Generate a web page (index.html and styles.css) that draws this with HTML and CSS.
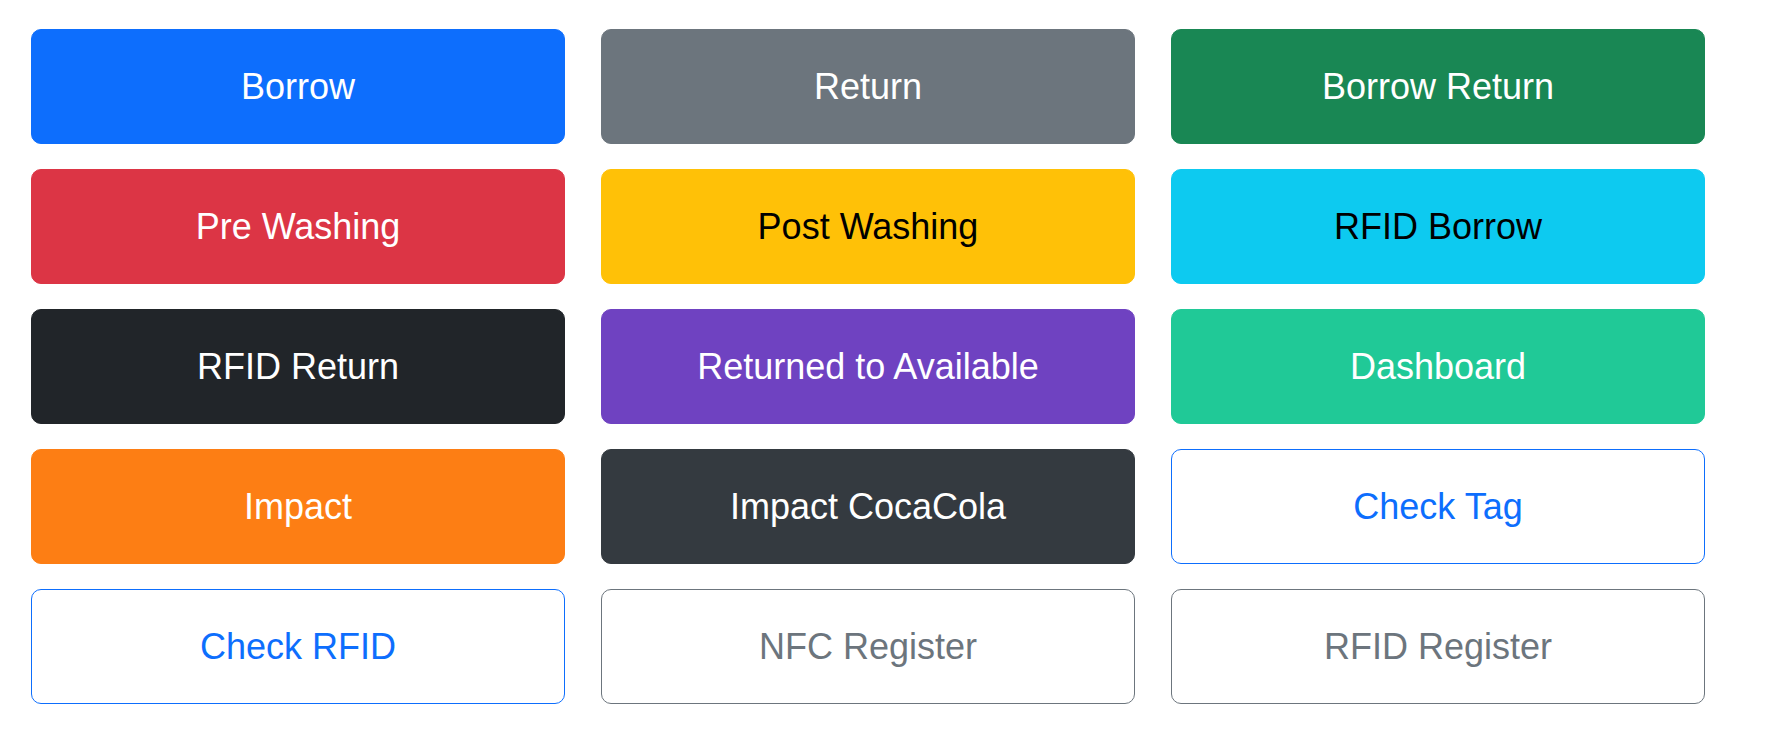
FILE: index.html
```html
<!DOCTYPE html>
<html lang="en">
<head>
<meta charset="utf-8">
<title>Actions</title>
<link rel="stylesheet" href="styles.css">
</head>
<body>
<main class="grid">
  <button class="btn btn-primary">Borrow</button>
  <button class="btn btn-secondary">Return</button>
  <button class="btn btn-success">Borrow Return</button>
  <button class="btn btn-danger">Pre Washing</button>
  <button class="btn btn-warning">Post Washing</button>
  <button class="btn btn-info">RFID Borrow</button>
  <button class="btn btn-dark">RFID Return</button>
  <button class="btn btn-purple">Returned to Available</button>
  <button class="btn btn-teal">Dashboard</button>
  <button class="btn btn-orange">Impact</button>
  <button class="btn btn-graydark">Impact CocaCola</button>
  <button class="btn btn-outline-primary">Check Tag</button>
  <button class="btn btn-outline-primary">Check RFID</button>
  <button class="btn btn-outline-secondary">NFC Register</button>
  <button class="btn btn-outline-secondary">RFID Register</button>
</main>
</body>
</html>
```

FILE: styles.css
```css
html, body {
  margin: 0;
  padding: 0;
  background: #ffffff;
}

.grid {
  display: grid;
  grid-template-columns: repeat(3, 534px);
  column-gap: 36px;
  row-gap: 25px;
  padding: 29px 0 0 31px;
}

.btn {
  height: 115px;
  margin: 0;
  padding: 1px 12px 0;
  border: 1px solid transparent;
  border-radius: 10px;
  font-family: "Liberation Sans", Arial, sans-serif;
  font-size: 36px;
  font-weight: 400;
  line-height: 1.5;
  text-align: center;
  cursor: pointer;
  color: #ffffff;
  background: #ffffff;
}

.btn-primary { background: #0d6efd; border-color: #0d6efd; }
.btn-secondary { background: #6c757d; border-color: #6c757d; }
.btn-success { background: #198754; border-color: #198754; }
.btn-danger { background: #dc3545; border-color: #dc3545; }
.btn-warning { background: #ffc107; border-color: #ffc107; color: #000000; }
.btn-info { background: #0dcaf0; border-color: #0dcaf0; color: #000000; }
.btn-dark { background: #212529; border-color: #212529; }
.btn-purple { background: #6f42c1; border-color: #6f42c1; }
.btn-teal { background: #20c997; border-color: #20c997; }
.btn-orange { background: #fd7e14; border-color: #fd7e14; }
.btn-graydark { background: #343a40; border-color: #343a40; }

.btn-outline-primary {
  background: #ffffff;
  border-color: #0d6efd;
  color: #0d6efd;
}

.btn-outline-secondary {
  background: #ffffff;
  border-color: #6c757d;
  color: #6c757d;
}
```
